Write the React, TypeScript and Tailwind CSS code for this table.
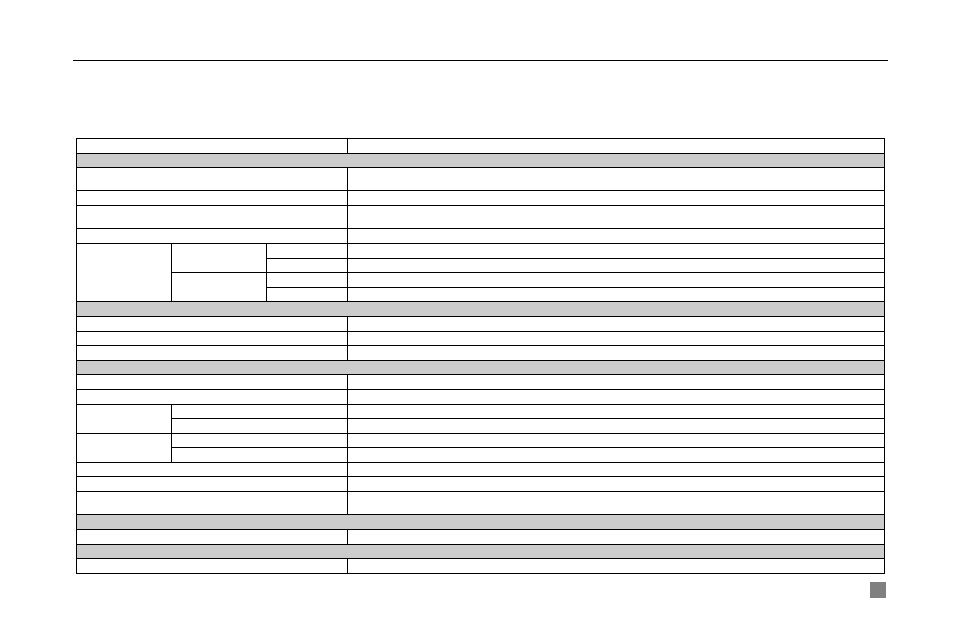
import type { ReactNode } from 'react';

const ROW = 'h-[14.6px]';
const TALL = 'h-[23.3px]';
const cell = 'border border-black p-0';

function Row({ tall, children }: { tall?: boolean; children: ReactNode }) {
  return <tr className={tall ? TALL : ROW}>{children}</tr>;
}

// plain two-part row: label spans the three left columns, value on the right
function Plain({ tall }: { tall?: boolean }) {
  return (
    <Row tall={tall}>
      <td colSpan={3} className={cell} />
      <td className={cell} />
    </Row>
  );
}

function Section() {
  return (
    <Row>
      <td colSpan={4} className={`${cell} bg-[#cccccc]`} />
    </Row>
  );
}

export default function App() {
  return (
    <div className="relative h-[637px] w-[954px] bg-white font-['Liberation_Sans',sans-serif]">
      <div className="pt-[60px]">
        <div className="ml-[73px] h-px w-[815px] bg-black" />
      </div>

      <table className="ml-[76px] mt-[77px] w-[809px] table-fixed border-collapse border border-black">
        <colgroup>
          <col className="w-[95px]" />
          <col className="w-[95px]" />
          <col className="w-[81px]" />
          <col />
        </colgroup>
        <tbody>
          <Plain />
          <Section />
          <Plain tall />
          <Plain />
          <Plain tall />
          <Plain />

          <Row>
            <td rowSpan={4} className={cell} />
            <td rowSpan={2} className={cell} />
            <td className={cell} />
            <td className={cell} />
          </Row>
          <Row>
            <td className={cell} />
            <td className={cell} />
          </Row>
          <Row>
            <td rowSpan={2} className={cell} />
            <td className={cell} />
            <td className={cell} />
          </Row>
          <Row>
            <td className={cell} />
            <td className={cell} />
          </Row>

          <Section />
          <Plain />
          <Plain />
          <Plain />

          <Section />
          <Plain />
          <Plain />

          <Row>
            <td rowSpan={2} className={cell} />
            <td colSpan={2} className={cell} />
            <td className={cell} />
          </Row>
          <Row>
            <td colSpan={2} className={cell} />
            <td className={cell} />
          </Row>
          <Row>
            <td rowSpan={2} className={cell} />
            <td colSpan={2} className={cell} />
            <td className={cell} />
          </Row>
          <Row>
            <td colSpan={2} className={cell} />
            <td className={cell} />
          </Row>

          <Plain />
          <Plain />
          <Plain tall />

          <Section />
          <Plain />
          <Section />
          <Plain />
        </tbody>
      </table>

      <div className="ml-[870px] mt-[8px] h-4 w-4 bg-[#808080]" />
    </div>
  );
}
